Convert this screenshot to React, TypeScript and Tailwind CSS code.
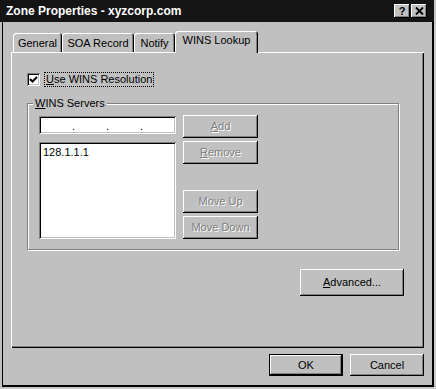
import type { ReactNode } from 'react';

const raised = 'bg-[#c0c0c0] shadow-[inset_-1px_-1px_0_#000,inset_1px_1px_0_#fff,inset_-2px_-2px_0_#808080]';
const sunken = 'bg-white shadow-[inset_1px_1px_0_#808080,inset_-1px_-1px_0_#fff,inset_2px_2px_0_#000,inset_-2px_-2px_0_#c0c0c0]';

function Btn({ children, disabled, className = '' }: { children: ReactNode; disabled?: boolean; className?: string }) {
    return (
        <div
            className={`${raised} flex items-center justify-center ${disabled ? 'text-[#808080] [text-shadow:1px_1px_0_#fff]' : 'text-black'} ${className}`}
        >
            {children}
        </div>
    );
}

function Tab({ label, w, active }: { label: string; w: string; active?: boolean }) {
    if (active) {
        return (
            <div
                className={`${w} h-[22px] -mb-[1px] relative z-10 bg-[#c0c0c0] rounded-t-[3px] flex items-center justify-center pb-[3px] shadow-[inset_1px_1px_0_#fff,inset_-1px_0_0_#000,inset_-2px_0_0_#808080]`}
            >
                {label}
            </div>
        );
    }
    return (
        <div
            className={`${w} h-[19px] bg-[#c0c0c0] rounded-t-[3px] flex items-center justify-center pt-[1px] shadow-[inset_1px_1px_0_#fff,inset_-1px_0_0_#000,inset_-2px_0_0_#808080]`}
        >
            {label}
        </div>
    );
}

export default function App() {
    return (
        <div className="w-[436px] h-[389px] bg-[#c8c8c8] font-['Liberation_Sans',Arial,sans-serif] text-[11px] text-black leading-[13px]">
            <div className="w-[434px] h-[387px] flex flex-col bg-[#c0c0c0]">
                {/* title bar */}
                <div className="h-[22px] bg-[#141414] flex items-center pl-[6px] pr-[7px]">
                    <span className="text-white font-bold text-[12px]">Zone Properties - xyzcorp.com</span>
                    <div className="ml-auto flex gap-[1px]">
                        <div className={`${raised} w-[16px] h-[14px] flex items-center justify-center font-bold text-[11px] leading-none pt-[1px]`}>?</div>
                        <div className={`${raised} w-[16px] h-[14px] flex items-center justify-center`}>
                            <svg width="9" height="8" viewBox="0 0 9 8">
                                <path d="M1 0.5 L8 7.5 M8 0.5 L1 7.5" stroke="#000" strokeWidth="1.8" />
                            </svg>
                        </div>
                    </div>
                </div>

                {/* body */}
                <div className="flex-1 ml-[2px] border-l border-r-2 border-b-2 border-black flex flex-col">
                    <div className="mt-[9px] ml-[10px] h-[21px] flex items-end">
                        <Tab label="General" w="w-[49px]" />
                        <Tab label="SOA Record" w="w-[72px]" />
                        <Tab label="Notify" w="w-[41px]" />
                        <Tab label="WINS Lookup" w="w-[83px]" active />
                    </div>

                    {/* tab page */}
                    <div className="ml-[8px] w-[413px] h-[296px] flex flex-col shadow-[inset_1px_1px_0_#fff,inset_-1px_-1px_0_#000,inset_-2px_-2px_0_#808080]">
                        <div className="mt-[20px] ml-[16px] flex items-center">
                            <div className={`${sunken} w-[13px] h-[13px] flex items-center justify-center`}>
                                <svg width="9" height="9" viewBox="0 0 9 9">
                                    <path d="M1 4 L3.5 6.5 L8 2" stroke="#000" strokeWidth="2" fill="none" />
                                </svg>
                            </div>
                            <div className="ml-[4px] h-[15px] px-[1px] border border-dotted border-black flex items-center">
                                <span>
                                    <u className="underline-offset-[1px]">U</u>se WINS Resolution
                                </span>
                            </div>
                        </div>

                        <fieldset className="mt-[10px] ml-[16px] w-[372px] h-[153px] border border-[#808080] shadow-[1px_1px_0_#fff,inset_1px_1px_0_#fff] pl-[11px] pr-[10px]">
                            <legend className="-ml-[6px] px-[2px] bg-[#c0c0c0] leading-[13px]">
                                <u className="underline-offset-[1px]">W</u>INS Servers
                            </legend>
                            <div className="flex mt-[6px]">
                                <div className="w-[137px] flex flex-col gap-[8px]">
                                    <div className={`${sunken} h-[18px] flex items-center px-[2px] pt-[2px]`}>
                                        <span className="flex-1" />
                                        <span>.</span>
                                        <span className="flex-1" />
                                        <span>.</span>
                                        <span className="flex-1" />
                                        <span>.</span>
                                        <span className="flex-1" />
                                    </div>
                                    <div className={`${sunken} h-[97px] pl-[4px] pt-[4px]`}>128.1.1.1</div>
                                </div>
                                <div className="ml-[7px] w-[75px] flex flex-col -mt-[1px]">
                                    <Btn disabled className="h-[23px]">
                                        <span>
                                            <u>A</u>dd
                                        </span>
                                    </Btn>
                                    <Btn disabled className="h-[23px] mt-[3px]">
                                        <span>
                                            <u>R</u>emove
                                        </span>
                                    </Btn>
                                    <Btn disabled className="h-[23px] mt-[26px]">
                                        Move Up
                                    </Btn>
                                    <Btn disabled className="h-[23px] mt-[3px]">
                                        Move Down
                                    </Btn>
                                </div>
                            </div>
                        </fieldset>

                        <div className="mt-[19px] mr-[20px] flex justify-end">
                            <Btn className="w-[104px] h-[27px]">
                                <span>
                                    <u>A</u>dvanced...
                                </span>
                            </Btn>
                        </div>
                    </div>

                    {/* dialog buttons */}
                    <div className="mt-[6px] mr-[8px] flex justify-end gap-[7px]">
                        <div className="border border-black">
                            <Btn className="w-[72px] h-[20px]">OK</Btn>
                        </div>
                        <Btn className="w-[74px] h-[22px]">Cancel</Btn>
                    </div>
                </div>
            </div>
        </div>
    );
}
